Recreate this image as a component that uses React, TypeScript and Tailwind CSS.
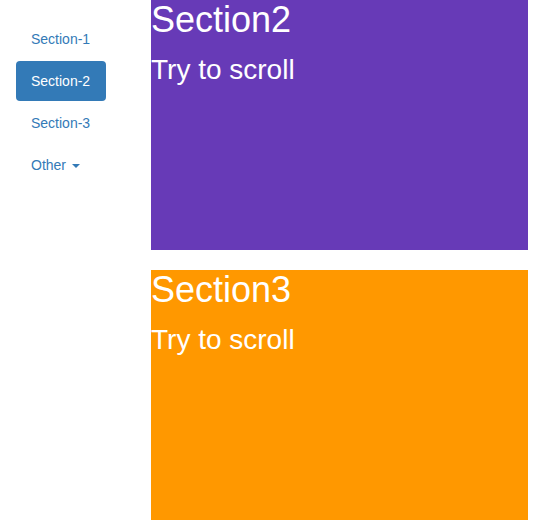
const sections = [
  { id: 'section2', title: 'Section2', bg: 'bg-[#673ab7]' },
  { id: 'section3', title: 'Section3', bg: 'bg-[#ff9800]' },
];

const navItems = ['Section-1', 'Section-2', 'Section-3'];

export default function App() {
  const active = 'Section-2';

  return (
    <div className="flex bg-white font-['Liberation_Sans',Arial,sans-serif] text-[14px] leading-[20px]">
      {/* Sidebar */}
      <nav className="w-[151px] shrink-0 pl-4 pt-[19px]">
        <ul className="flex w-[90px] flex-col gap-[2px]">
          {navItems.map((item) => (
            <li key={item}>
              <a
                href="#"
                className={
                  item === active
                    ? 'block rounded px-[15px] py-[10px] bg-[#337ab7] text-white'
                    : 'block rounded px-[15px] py-[10px] text-[#337ab7]'
                }
              >
                {item}
              </a>
            </li>
          ))}
          <li>
            <a href="#" className="flex items-center px-[15px] py-[10px] text-[#337ab7]">
              Other
              <span className="ml-[6px] mt-[1px] h-0 w-0 border-x-4 border-t-4 border-x-transparent border-t-[#337ab7]" />
            </a>
          </li>
        </ul>
      </nav>

      {/* Content */}
      <div className="flex w-[377px] flex-col gap-5">
        {sections.map((s) => (
          <div key={s.id} className={`h-[250px] text-white ${s.bg}`}>
            <h1 className="pt-[1px] text-[36px] leading-[38px]">{s.title}</h1>
            <h2 className="mt-[15px] text-[28px] leading-[31px]">Try to scroll</h2>
          </div>
        ))}
        <div className="h-[11px]" />
      </div>
    </div>
  );
}
